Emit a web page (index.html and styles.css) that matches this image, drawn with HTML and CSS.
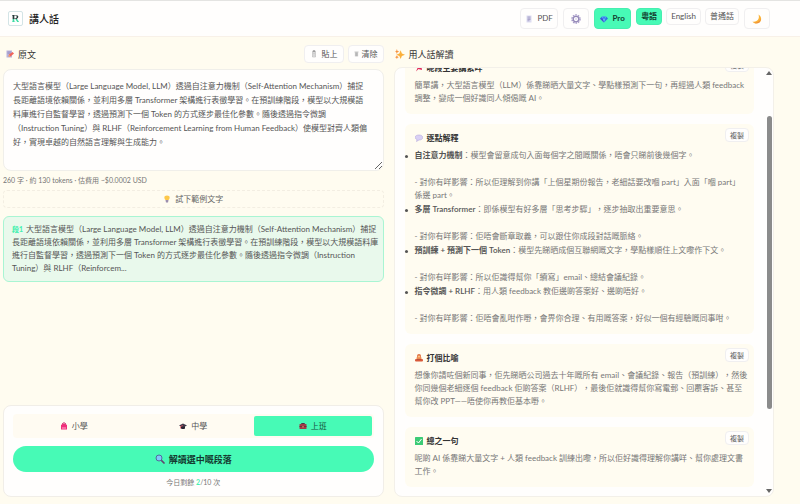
FILE: index.html
```html
<!DOCTYPE html>
<html lang="zh-Hant-HK">
<head>
<meta charset="utf-8">
<meta name="viewport" content="width=device-width, initial-scale=1">
<title>講人話</title>
<link rel="stylesheet" href="styles.css">
</head>
<body>
<header class="topbar">
  <div class="logo"><span>R</span></div>
  <h1>講人話</h1>
  <div class="tools">
    <button class="btn tool pdf"><svg class="ico" viewBox="0 0 16 16"><path d="M3 1h10v14H3z" fill="#dcdcf0"/><path d="M5 4h6M5 6.500h6M5 9h6M5 11.500h4" stroke="#8b82b4" stroke-width="1.200"/></svg>PDF</button>
    <button class="btn tool square" aria-label="設定"><svg class="ico-l" viewBox="0 0 20 20"><circle cx="10" cy="10" r="8" fill="none" stroke="#a79cc8" stroke-width="3" stroke-dasharray="3.200 1.830"/><circle cx="10" cy="10" r="5.500" fill="#fff" stroke="#9488b8" stroke-width="2.500"/><circle cx="10" cy="10" r="1.500" fill="#c3bada"/></svg></button>
    <button class="btn tool pro"><svg class="ico" viewBox="0 0 16 16"><path d="M4 3h8l4 4-8 8-8-8z" fill="#2f6fe4"/><path d="M4 3l1 4 3-4 3 4 1-4M5 7l3 8 3-8z" fill="#5fb2fb"/><path d="M0 7h5l3 8z" fill="#4b47cf"/></svg>Pro</button>
    <div class="langs">
      <button class="btn lang on">粵語</button>
      <button class="btn lang">English</button>
      <button class="btn lang">普通話</button>
    </div>
    <button class="btn tool square" aria-label="深色模式"><svg class="ico-l" viewBox="0 0 20 20"><path d="M13 1c8 5 7 17-3 18-4 .4-7-1-9-4 9 2 15-5 12-14z" fill="#fbb337"/><path d="M17 8c0 6-6 10-13 9 6 4 15 1 13-9z" fill="#ee8e3f"/></svg></button>
  </div>
</header>

<main class="columns">
  <section class="col">
    <div class="head">
      <h2><svg class="ico" viewBox="0 0 16 16"><path d="M1 1h11v14H1z" fill="#b9b4dc"/><path d="M3 4h7M3 6.500h6" stroke="#8076b0"/><path d="M5 13l1-4 7-5 3 3-7 6z" fill="#f0645a"/><path d="M5 13l1-4 3 4z" fill="#f8b26a"/></svg>原文</h2>
      <div class="actions">
        <button class="btn small paste"><svg class="ico" viewBox="0 0 16 16"><path d="M5 2h6v12H5z" fill="#e3e3e3" stroke="#aaa"/><path d="M7 1h2v3H7zM7 7h2M7 10h2" stroke="#888" fill="#999"/></svg>貼上</button>
        <button class="btn small"><svg class="ico-s" viewBox="0 0 12 16"><path d="M2 3h8v11H2z" fill="#d5d5d5"/><path d="M1 3h10M4 5v8M6 5v8M8 5v8" stroke="#999"/></svg>清除</button>
      </div>
    </div>
    <textarea class="source" wrap="off" aria-label="原文">大型語言模型（Large Language Model, LLM）透過自注意力機制（Self-Attention Mechanism）捕捉
長距離語境依賴關係，並利用多層 Transformer 架構進行表徵學習。在預訓練階段，模型以大規模語
料庫進行自監督學習，透過預測下一個 Token 的方式逐步最佳化參數。隨後透過指令微調
（Instruction Tuning）與 RLHF（Reinforcement Learning from Human Feedback）使模型對齊人類偏
好，實現卓越的自然語言理解與生成能力。</textarea>
    <p class="stats">260 字 · 約 130 tokens · 估費用 ~$0.0002 USD</p>
    <button class="sample"><svg class="ico" viewBox="0 0 16 16"><path d="M8 1c7 0 6 6 3 9H5C2 7 1 1 8 1z" fill="#fdc84a"/><path d="M5 10h6l-1 5H6z" fill="#9b8eae"/></svg>試下範例文字</button>
    <article class="segment"><b>段1</b>大型語言模型（Large Language Model, LLM）透過自注意力機制（Self-Attention Mechanism）捕捉<br>長距離語境依賴關係，並利用多層 Transformer 架構進行表徵學習。在預訓練階段，模型以大規模語料庫<br>進行自監督學習，透過預測下一個 Token 的方式逐步最佳化參數。隨後透過指令微調（Instruction<br>Tuning）與 RLHF（Reinforcem...</article>
    <div class="panel">
      <div class="levels">
        <button><svg class="ico" viewBox="0 0 16 16"><path d="M5 5V3q3-3 6 0v2" fill="none" stroke="#c52364" stroke-width="2"/><path d="M2 6q6-5 12 0v9H2z" fill="#ef2f7b"/><path d="M4 10h8v4H4z" fill="#fa6ba3"/></svg>小學</button>
        <button><svg class="ico" viewBox="0 0 16 16"><path d="M0 7l8-4 8 4-8 4z" fill="#40394a"/><path d="M4 8v5q4 2 8 0V8l-4 2z" fill="#292331"/><path d="M8 7l-5 2v4" fill="none" stroke="#e7525d" stroke-width="1.500"/></svg>中學</button>
        <button class="on"><svg class="ico" viewBox="0 0 16 16"><path d="M5 5V3h6v2" fill="none" stroke="#4d3545" stroke-width="2"/><rect x="1" y="4" width="14" height="10" rx="1" fill="#a33b48"/><path d="M1 8h14v2H1z" fill="#69333f"/><path d="M7 8h2v3H7z" fill="#efb567"/></svg>上班</button>
      </div>
      <button class="go"><svg class="ico-l" viewBox="0 0 20 20"><path d="M12 12l6 6" stroke="#62446b" stroke-width="3.500" stroke-linecap="round"/><circle cx="8" cy="8" r="6" fill="#7fc8fa" stroke="#536a9d" stroke-width="2"/></svg>解讀選中嘅段落</button>
      <p class="quota">今日剩餘 <b>2</b>/10 次</p>
    </div>
  </section>

  <section class="col">
    <div class="head">
      <h2><svg class="ico-l" viewBox="0 0 16 16"><path d="M9 2l2 5 5 2-5 2-2 5-2-5-5-2 5-2z" fill="#fbb03b"/><path d="M3 0l1 3 3 1-3 1-1 3-1-3-2-1 2-1zM3 10l1 2 2 1-2 1-1 2-1-2-2-1 2-1z" fill="#f7933f"/></svg>用人話解讀</h2>
    </div>
    <div class="result">
      <div class="cards">
        <article class="card">
          <div class="card-head"><h3><svg class="ico" viewBox="0 0 16 16"><path d="M6 1l9 2-2 3 1 6-4-1-3-1-5 5 3-7-3-3 5-1z" fill="#e02b5b"/></svg>呢段主要講緊咩</h3><button class="btn copy">複製</button></div>
          <p>簡單講，大型語言模型（LLM）係靠睇晒大量文字、學點樣預測下一句，再經過人類 feedback<br>調整，變成一個好識同人傾偈嘅 AI。</p>
        </article>
        <article class="card">
          <div class="card-head"><h3><svg class="ico" viewBox="0 0 16 16"><path d="M8 2c10 0 10 10 0 10l-5 3 1-4C-3 8 0 2 8 2z" fill="#d9d0f4" stroke="#ad9edb"/></svg>逐點解釋</h3><button class="btn copy">複製</button></div>
          <ul>
            <li><b>自注意力機制</b>：模型會留意成句入面每個字之間嘅關係，唔會只睇前後幾個字。<div class="effect">- 對你有咩影響：所以佢理解到你講「上個星期份報告，老細話要改嗰 part」入面「嗰 part」<br>係邊 part。</div></li>
            <li><b>多層 Transformer</b>：即係模型有好多層「思考步驟」，逐步抽取出重要意思。<div class="effect">- 對你有咩影響：佢唔會斷章取義，可以跟住你成段對話嘅脈絡。</div></li>
            <li><b>預訓練 + 預測下一個 Token</b>：模型先睇晒成個互聯網嘅文字，學點樣順住上文嚟作下文。<div class="effect">- 對你有咩影響：所以佢識得幫你「續寫」email、總結會議紀錄。</div></li>
            <li><b>指令微調 + RLHF</b>：用人類 feedback 教佢邊啲答案好、邊啲唔好。<div class="effect">- 對你有咩影響：佢唔會亂咁作嘢，會畀你合理、有用嘅答案，好似一個有經驗嘅同事咁。</div></li>
          </ul>
        </article>
        <article class="card">
          <div class="card-head"><h3><svg class="ico" viewBox="0 0 16 16"><circle cx="8" cy="4" r="4" fill="#e0703f"/><rect x="3" y="6" width="10" height="5" rx="2" fill="#ee8a4c"/><rect x="0" y="10" width="16" height="5" rx="2" fill="#d8593a"/><circle cx="8" cy="5" r="2" fill="#ffc98a"/><path d="M4 11h8" stroke="#a1483a" stroke-width="1"/></svg>打個比喻</h3><button class="btn copy">複製</button></div>
          <p>想像你請咗個新同事，佢先睇晒公司過去十年嘅所有 email、會議紀錄、報告（預訓練），然後<br>你同幾個老細逐個 feedback 佢啲答案（RLHF），最後佢就識得幫你寫電郵、回覆客訴、甚至<br>幫你改 PPT——唔使你再教佢基本嘢。</p>
        </article>
        <article class="card">
          <div class="card-head"><h3><svg class="ico" viewBox="0 0 16 16"><rect width="16" height="16" rx="1" fill="#3ccb76"/><path d="M3 8l4 4 6-8" fill="none" stroke="#fff" stroke-width="2"/></svg>總之一句</h3><button class="btn copy">複製</button></div>
          <p>呢啲 AI 係靠睇大量文字 + 人類 feedback 訓練出嚟，所以佢好識得理解你講咩、幫你處理文書<br>工作。</p>
        </article>
      </div>
      <div class="scroll" aria-hidden="true"><i class="up"></i><div class="track"><div class="thumb"></div></div><i class="down"></i></div>
    </div>
  </section>
</main>
</body>
</html>
```
FILE: styles.css
```css
* { box-sizing: border-box; }
body {
  margin: 0;
  height: 100vh;
  display: flex;
  flex-direction: column;
  overflow: hidden;
  background: #fffcf0;
  color: #555;
  font: 8px/13px Lato, "Noto Sans CJK TC", sans-serif;
}
h1, h2, h3, p, ul { margin: 0; padding: 0; }
button, textarea { font: inherit; color: inherit; }
button {
  display: flex;
  align-items: center;
  justify-content: center;
  gap: 4px;
  padding: 0;
  border: 0;
  background: none;
  white-space: nowrap;
}
svg { display: block; flex: none; }
.ico { width: 8px; height: 8px; }
.ico-s { width: 5px; height: 8px; }
.ico-l { width: 10px; height: 10px; }

.topbar {
  display: flex;
  align-items: center;
  flex: none;
  height: 37px;
  padding: 0 30px 0 8px;
  border-top: 1px solid #e4e4e2;
  border-bottom: 1px solid #f8f1e8;
  background: #fffefd;
}
.logo {
  display: grid;
  place-items: center;
  width: 15px;
  height: 15px;
  border: 1px solid #d3e4e6;
  border-radius: 2px;
  background: #fff;
}
.logo span {
  font: bold 11px/11px "Liberation Serif", serif;
  color: transparent;
  background: linear-gradient(#263b3b 50%, #3edca4 60%);
  background-clip: text;
}
h1 { margin-left: 6px; font-size: 10px; line-height: 14px; font-weight: 500; color: #222; }
.tools { display: flex; gap: 5px; margin-left: auto; }
.btn { border: 1px solid #f0eff0; border-radius: 4px; background: #fffefd; }
.tool { height: 21px; padding: 0 5px; }
.pdf { width: 38px; }
.square { width: 26px; }
.pro { width: 37px; font-weight: 700; }
.tool.pro, .lang.on { background: #47fab6; border-color: #47eeb0; color: #143d30; }
.langs { display: flex; gap: 4px; align-items: flex-start; }
.lang { height: 17px; padding: 0 4px; }
.lang.on { font-weight: 700; }

.columns {
  flex: 1;
  min-height: 0;
  display: grid;
  grid-template-columns: 1fr 1fr;
  gap: 10px;
  padding: 8px 26px 7px 3px;
}
.col { display: flex; flex-direction: column; min-width: 0; min-height: 0; }
.head { display: flex; justify-content: space-between; align-items: center; flex: none; height: 18px; margin-bottom: 4px; padding-left: 3px; }
.head:has(.ico-l) { padding-left: 1px; }
h2 { display: flex; align-items: center; gap: 4px; font-size: 9px; font-weight: 400; color: #333; }
.actions { display: flex; gap: 4px; }
.small { height: 18px; padding: 0 5px; gap: 3px; }
.paste { gap: 4px; }
.source {
  flex: none;
  height: 102px;
  margin: 2px 0 0;
  padding: 9px;
  border: 1px solid #f0efea;
  border-radius: 8px;
  background: #fffefd;
  line-height: 14px;
  overflow: hidden;
  resize: vertical;
}
.stats { margin: 3px 0 4px; font-size: 7px; line-height: 12px; color: #777; }
.sample { flex: none; height: 18px; border: 1px dashed #f3eee2; border-radius: 4px; color: #666; }
.segment {
  margin-top: 8px;
  padding: 6px 8px;
  border: 1px solid #a9f5d3;
  border-radius: 6px;
  background: #e9f9ec;
  white-space: nowrap;
}
.segment b { margin-right: 3px; font-size: 7px; font-weight: 900; color: #47f0b0; }
.panel {
  margin-top: auto;
  padding: 8px 9px;
  border: 1px solid #f1eee8;
  border-radius: 8px;
  background: #fffefd;
}
.levels { display: grid; grid-template-columns: 1fr 1fr 1fr; gap: 2px; padding: 2px; border-radius: 4px; background: #fffbf2; }
.levels button { height: 20px; border-radius: 2px; }
.levels .on { background: #47fab6; color: #17523f; }
.go { width: 100%; height: 26px; margin: 8px 0 4px; border-radius: 13px; background: #47fab6; color: #14392f; font-size: 9px; font-weight: 600; }
.quota { font-size: 7px; line-height: 12px; text-align: center; color: #777; }
.quota b { color: #47f0b0; }

.result {
  flex: 1;
  min-height: 0;
  display: flex;
  border: 1px solid #f3f0e9;
  border-radius: 8px;
  background: #fffefd;
  overflow: hidden;
}
.cards { flex: 1; min-width: 0; display: flex; flex-direction: column; justify-content: flex-end; gap: 10px; padding: 0 11px 9px 10px; }
.card { flex: none; padding: 4px 5px 9px 10px; border-radius: 6px; background: #fffcf1; color: #777; white-space: nowrap; }
.card-head { display: flex; justify-content: space-between; align-items: flex-start; margin-bottom: 4px; }
h3 { display: flex; align-items: center; gap: 4px; padding-top: 3px; font-size: 8px; line-height: 14px; font-weight: 600; color: #333; }
.copy { height: 14px; padding: 0 4px; font-size: 7px; color: #555; }
ul { list-style: none; }
li { position: relative; margin-bottom: 1px; }
li:last-child { margin-bottom: 0; }
li::before { content: ""; position: absolute; left: -10px; top: 6px; width: 3px; height: 3px; border-radius: 50%; background: #555; }
li b { font-weight: 600; color: #555; }
.effect { margin-top: 14px; }
.scroll { flex: none; width: 8px; display: flex; flex-direction: column; align-items: center; padding: 3px 0; }
.up, .down { border: 3px solid transparent; }
.up { border-top-width: 0; border-bottom: 4px solid #666; }
.down { border-bottom-width: 0; border-top: 4px solid #666; }
.track { flex: 1; display: grid; grid-template-rows: 41fr 294fr 80fr; }
.thumb { grid-row: 2; width: 5px; border-radius: 3px; background: #8b8b8b; }
```
